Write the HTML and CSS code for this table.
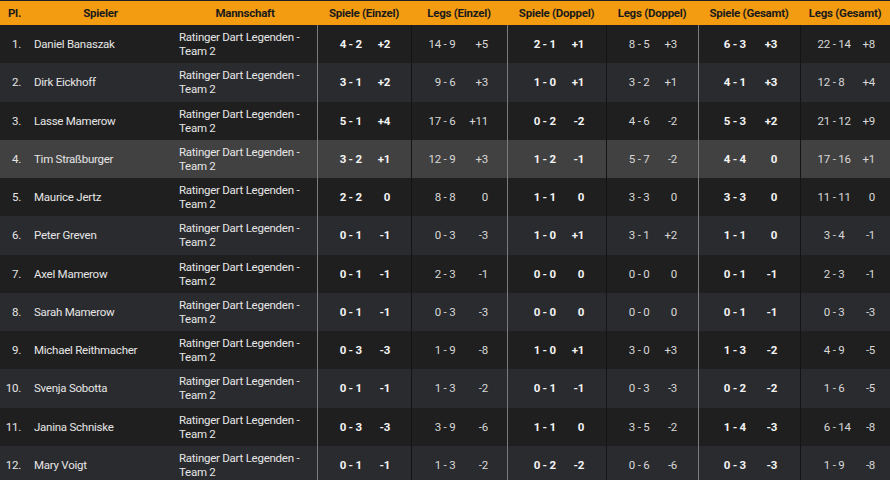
FILE: index.html
```html
<!DOCTYPE html>
<html lang="de">
<head>
<meta charset="utf-8">
<title>Spielerstatistik</title>
<link rel="stylesheet" href="styles.css">
</head>
<body>
<table class="stats">
<colgroup>
<col class="w-pl"><col class="w-sp"><col class="w-tm">
<col class="w-1a"><col class="w-1b"><col class="w-2a"><col class="w-2b">
<col class="w-3a"><col class="w-3b"><col class="w-4a"><col class="w-4b">
<col class="w-5a"><col class="w-5b"><col class="w-6a"><col class="w-6b">
</colgroup>
<thead>
<tr>
<th class="h-pl">Pl.</th><th>Spieler</th><th>Mannschaft</th>
<th colspan="2">Spiele (Einzel)</th><th colspan="2">Legs (Einzel)</th>
<th colspan="2">Spiele (Doppel)</th><th colspan="2">Legs (Doppel)</th>
<th colspan="2">Spiele (Gesamt)</th><th colspan="2">Legs (Gesamt)</th>
</tr>
</thead>
<tbody>
<tr><td class="pl">1.</td><td class="name">Daniel Banaszak</td><td class="team">Ratinger Dart Legenden - Team 2</td>
<td class="sc c1"><span class="a">4</span> - <span class="b">2</span></td><td class="df c1">+2</td>
<td class="sc c2"><span class="a">14</span> - <span class="b">9</span></td><td class="df c2">+5</td>
<td class="sc c3"><span class="a">2</span> - <span class="b">1</span></td><td class="df c3">+1</td>
<td class="sc c4"><span class="a">8</span> - <span class="b">5</span></td><td class="df c4">+3</td>
<td class="sc c5"><span class="a">6</span> - <span class="b">3</span></td><td class="df c5">+3</td>
<td class="sc c6"><span class="a">22</span> - <span class="b">14</span></td><td class="df c6">+8</td></tr>
<tr><td class="pl">2.</td><td class="name">Dirk Eickhoff</td><td class="team">Ratinger Dart Legenden - Team 2</td>
<td class="sc c1"><span class="a">3</span> - <span class="b">1</span></td><td class="df c1">+2</td>
<td class="sc c2"><span class="a">9</span> - <span class="b">6</span></td><td class="df c2">+3</td>
<td class="sc c3"><span class="a">1</span> - <span class="b">0</span></td><td class="df c3">+1</td>
<td class="sc c4"><span class="a">3</span> - <span class="b">2</span></td><td class="df c4">+1</td>
<td class="sc c5"><span class="a">4</span> - <span class="b">1</span></td><td class="df c5">+3</td>
<td class="sc c6"><span class="a">12</span> - <span class="b">8</span></td><td class="df c6">+4</td></tr>
<tr><td class="pl">3.</td><td class="name">Lasse Mamerow</td><td class="team">Ratinger Dart Legenden - Team 2</td>
<td class="sc c1"><span class="a">5</span> - <span class="b">1</span></td><td class="df c1">+4</td>
<td class="sc c2"><span class="a">17</span> - <span class="b">6</span></td><td class="df c2">+11</td>
<td class="sc c3"><span class="a">0</span> - <span class="b">2</span></td><td class="df c3">-2</td>
<td class="sc c4"><span class="a">4</span> - <span class="b">6</span></td><td class="df c4">-2</td>
<td class="sc c5"><span class="a">5</span> - <span class="b">3</span></td><td class="df c5">+2</td>
<td class="sc c6"><span class="a">21</span> - <span class="b">12</span></td><td class="df c6">+9</td></tr>
<tr class="hl"><td class="pl">4.</td><td class="name">Tim Straßburger</td><td class="team">Ratinger Dart Legenden - Team 2</td>
<td class="sc c1"><span class="a">3</span> - <span class="b">2</span></td><td class="df c1">+1</td>
<td class="sc c2"><span class="a">12</span> - <span class="b">9</span></td><td class="df c2">+3</td>
<td class="sc c3"><span class="a">1</span> - <span class="b">2</span></td><td class="df c3">-1</td>
<td class="sc c4"><span class="a">5</span> - <span class="b">7</span></td><td class="df c4">-2</td>
<td class="sc c5"><span class="a">4</span> - <span class="b">4</span></td><td class="df c5">0</td>
<td class="sc c6"><span class="a">17</span> - <span class="b">16</span></td><td class="df c6">+1</td></tr>
<tr><td class="pl">5.</td><td class="name">Maurice Jertz</td><td class="team">Ratinger Dart Legenden - Team 2</td>
<td class="sc c1"><span class="a">2</span> - <span class="b">2</span></td><td class="df c1">0</td>
<td class="sc c2"><span class="a">8</span> - <span class="b">8</span></td><td class="df c2">0</td>
<td class="sc c3"><span class="a">1</span> - <span class="b">1</span></td><td class="df c3">0</td>
<td class="sc c4"><span class="a">3</span> - <span class="b">3</span></td><td class="df c4">0</td>
<td class="sc c5"><span class="a">3</span> - <span class="b">3</span></td><td class="df c5">0</td>
<td class="sc c6"><span class="a">11</span> - <span class="b">11</span></td><td class="df c6">0</td></tr>
<tr><td class="pl">6.</td><td class="name">Peter Greven</td><td class="team">Ratinger Dart Legenden - Team 2</td>
<td class="sc c1"><span class="a">0</span> - <span class="b">1</span></td><td class="df c1">-1</td>
<td class="sc c2"><span class="a">0</span> - <span class="b">3</span></td><td class="df c2">-3</td>
<td class="sc c3"><span class="a">1</span> - <span class="b">0</span></td><td class="df c3">+1</td>
<td class="sc c4"><span class="a">3</span> - <span class="b">1</span></td><td class="df c4">+2</td>
<td class="sc c5"><span class="a">1</span> - <span class="b">1</span></td><td class="df c5">0</td>
<td class="sc c6"><span class="a">3</span> - <span class="b">4</span></td><td class="df c6">-1</td></tr>
<tr><td class="pl">7.</td><td class="name">Axel Mamerow</td><td class="team">Ratinger Dart Legenden - Team 2</td>
<td class="sc c1"><span class="a">0</span> - <span class="b">1</span></td><td class="df c1">-1</td>
<td class="sc c2"><span class="a">2</span> - <span class="b">3</span></td><td class="df c2">-1</td>
<td class="sc c3"><span class="a">0</span> - <span class="b">0</span></td><td class="df c3">0</td>
<td class="sc c4"><span class="a">0</span> - <span class="b">0</span></td><td class="df c4">0</td>
<td class="sc c5"><span class="a">0</span> - <span class="b">1</span></td><td class="df c5">-1</td>
<td class="sc c6"><span class="a">2</span> - <span class="b">3</span></td><td class="df c6">-1</td></tr>
<tr><td class="pl">8.</td><td class="name">Sarah Mamerow</td><td class="team">Ratinger Dart Legenden - Team 2</td>
<td class="sc c1"><span class="a">0</span> - <span class="b">1</span></td><td class="df c1">-1</td>
<td class="sc c2"><span class="a">0</span> - <span class="b">3</span></td><td class="df c2">-3</td>
<td class="sc c3"><span class="a">0</span> - <span class="b">0</span></td><td class="df c3">0</td>
<td class="sc c4"><span class="a">0</span> - <span class="b">0</span></td><td class="df c4">0</td>
<td class="sc c5"><span class="a">0</span> - <span class="b">1</span></td><td class="df c5">-1</td>
<td class="sc c6"><span class="a">0</span> - <span class="b">3</span></td><td class="df c6">-3</td></tr>
<tr><td class="pl">9.</td><td class="name">Michael Reithmacher</td><td class="team">Ratinger Dart Legenden - Team 2</td>
<td class="sc c1"><span class="a">0</span> - <span class="b">3</span></td><td class="df c1">-3</td>
<td class="sc c2"><span class="a">1</span> - <span class="b">9</span></td><td class="df c2">-8</td>
<td class="sc c3"><span class="a">1</span> - <span class="b">0</span></td><td class="df c3">+1</td>
<td class="sc c4"><span class="a">3</span> - <span class="b">0</span></td><td class="df c4">+3</td>
<td class="sc c5"><span class="a">1</span> - <span class="b">3</span></td><td class="df c5">-2</td>
<td class="sc c6"><span class="a">4</span> - <span class="b">9</span></td><td class="df c6">-5</td></tr>
<tr><td class="pl">10.</td><td class="name">Svenja Sobotta</td><td class="team">Ratinger Dart Legenden - Team 2</td>
<td class="sc c1"><span class="a">0</span> - <span class="b">1</span></td><td class="df c1">-1</td>
<td class="sc c2"><span class="a">1</span> - <span class="b">3</span></td><td class="df c2">-2</td>
<td class="sc c3"><span class="a">0</span> - <span class="b">1</span></td><td class="df c3">-1</td>
<td class="sc c4"><span class="a">0</span> - <span class="b">3</span></td><td class="df c4">-3</td>
<td class="sc c5"><span class="a">0</span> - <span class="b">2</span></td><td class="df c5">-2</td>
<td class="sc c6"><span class="a">1</span> - <span class="b">6</span></td><td class="df c6">-5</td></tr>
<tr><td class="pl">11.</td><td class="name">Janina Schniske</td><td class="team">Ratinger Dart Legenden - Team 2</td>
<td class="sc c1"><span class="a">0</span> - <span class="b">3</span></td><td class="df c1">-3</td>
<td class="sc c2"><span class="a">3</span> - <span class="b">9</span></td><td class="df c2">-6</td>
<td class="sc c3"><span class="a">1</span> - <span class="b">1</span></td><td class="df c3">0</td>
<td class="sc c4"><span class="a">3</span> - <span class="b">5</span></td><td class="df c4">-2</td>
<td class="sc c5"><span class="a">1</span> - <span class="b">4</span></td><td class="df c5">-3</td>
<td class="sc c6"><span class="a">6</span> - <span class="b">14</span></td><td class="df c6">-8</td></tr>
<tr><td class="pl">12.</td><td class="name">Mary Voigt</td><td class="team">Ratinger Dart Legenden - Team 2</td>
<td class="sc c1"><span class="a">0</span> - <span class="b">1</span></td><td class="df c1">-1</td>
<td class="sc c2"><span class="a">1</span> - <span class="b">3</span></td><td class="df c2">-2</td>
<td class="sc c3"><span class="a">0</span> - <span class="b">2</span></td><td class="df c3">-2</td>
<td class="sc c4"><span class="a">0</span> - <span class="b">6</span></td><td class="df c4">-6</td>
<td class="sc c5"><span class="a">0</span> - <span class="b">3</span></td><td class="df c5">-3</td>
<td class="sc c6"><span class="a">1</span> - <span class="b">9</span></td><td class="df c6">-8</td></tr>
</tbody>
</table>
</body>
</html>
```

FILE: styles.css
```css
html, body {
  margin: 0;
  padding: 0;
  background: #1f1f1f;
  overflow: hidden;
}

.stats {
  width: 890px;
  margin-top: 1px;
  table-layout: fixed;
  border-collapse: separate;
  border-spacing: 0;
  font-family: Roboto, "Liberation Sans", sans-serif;
  font-size: 11.5px;
  letter-spacing: -0.25px;
  color: #e6e6e6;
}

.w-pl { width: 28px; }
.w-sp { width: 145px; }
.w-tm { width: 144px; }
.w-1a { width: 53px; } .w-1b { width: 41px; }
.w-2a { width: 54px; } .w-2b { width: 42px; }
.w-3a { width: 57px; } .w-3b { width: 42px; }
.w-4a { width: 53px; } .w-4b { width: 39px; }
.w-5a { width: 56px; } .w-5b { width: 46px; }
.w-6a { width: 54px; } .w-6b { width: 36px; }

.stats thead th {
  background: #f39c12;
  color: #1a1a1a;
  font-weight: 700;
  height: 24px;
  padding: 0;
  text-align: center;
  white-space: nowrap;
  vertical-align: middle;
}

.stats thead th.h-pl {
  text-align: right;
  padding-right: 7px;
}

.stats td {
  height: 38.25px;
  padding: 0;
  vertical-align: middle;
  white-space: nowrap;
  background: #1f1f1f;
}

.stats tbody tr:nth-child(even) td { background: #2a2b2f; }
.stats tbody tr.hl td { background: #414141; }

.pl {
  text-align: right;
  padding-right: 7px !important;
}

.name { padding-left: 6px !important; }

.team {
  padding-left: 6px !important;
  white-space: normal !important;
  line-height: 14px;
}

.sc .a {
  display: inline-block;
  width: 14px;
  text-align: right;
}

.sc .b {
  display: inline-block;
  width: 14px;
  text-align: left;
}

.df { text-align: right; }

.c1, .c3, .c5 {
  font-weight: 700;
  color: #f4f4f4;
}

.c2, .c4, .c6 { color: #d8d8d8; }

.sc.c1, .sc.c3, .sc.c5 { box-shadow: inset 1px 0 0 #7c7c7c; }
.sc.c2, .sc.c4, .sc.c6 { box-shadow: inset 1px 0 0 #141414; }

.sc.c1 { padding-left: 15px; }
.sc.c2 { padding-left: 16px; }
.sc.c3 { padding-left: 19px; }
.sc.c4 { padding-left: 15px; }
.sc.c5 { padding-left: 18px; }
.sc.c6 { padding-left: 16px; }

.df.c1 { padding-right: 21px; }
.df.c2 { padding-right: 19px; }
.df.c3 { padding-right: 22px; }
.df.c4 { padding-right: 21px; }
.df.c5 { padding-right: 23px; }
.df.c6 { padding-right: 15px; }
```
